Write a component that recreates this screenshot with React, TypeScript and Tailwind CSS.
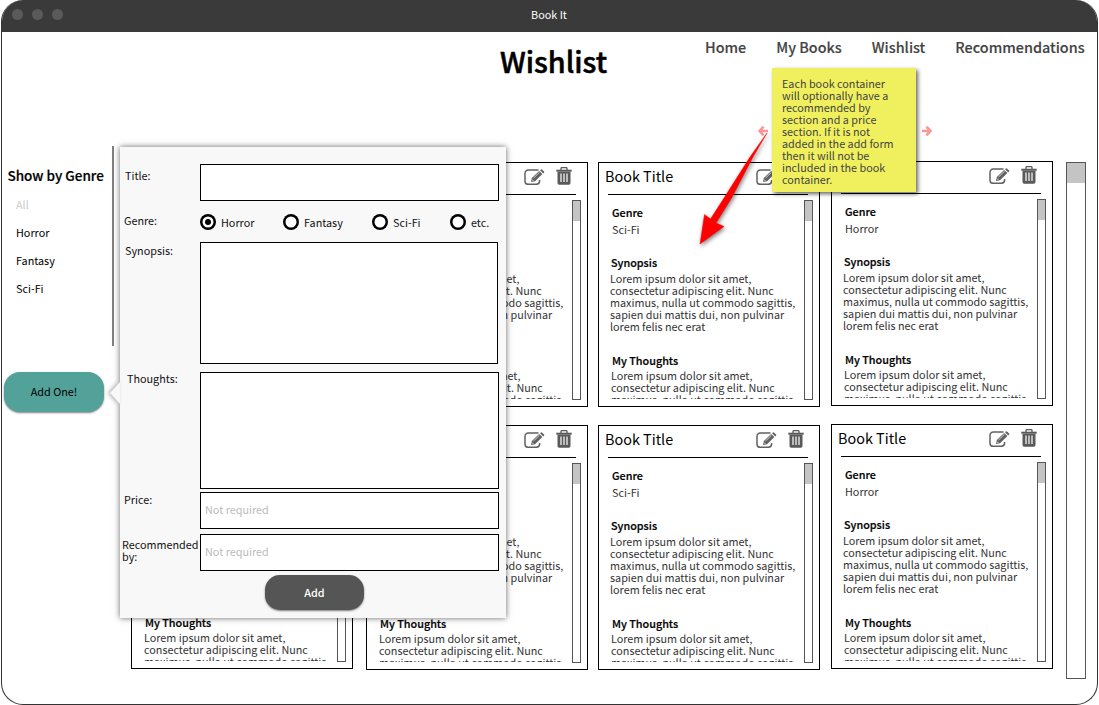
import React from "react";

const LOREM = [
  "Lorem ipsum dolor sit amet,",
  "consectetur adipiscing elit. Nunc",
  "maximus, nulla ut commodo sagittis,",
  "sapien dui mattis dui, non pulvinar",
  "lorem felis nec erat",
];

function EditIcon() {
  return (
    <svg className="h-4 w-[21px]" viewBox="0 0 21 16" fill="none">
      <path d="M14.5 1H4.2A3.2 3.2 0 0 0 1 4.2v8A3.2 3.2 0 0 0 4.2 15.3h8.2A3.2 3.2 0 0 0 15.6 12.1V11" stroke="#616161" strokeWidth="1.5" />
      <path d="M7 13l.8-4L15.2 2l3.2 3-7.4 7.2z" fill="#616161" />
      <path d="M16 1.3l.9-.8q.5-.4 1 0l2.2 2.1q.4.5 0 .9l-.9.9z" fill="#616161" />
      <path d="M9.5 9l6-5.7" stroke="#fff" strokeWidth=".7" />
      <path d="M8 10.6l1.5 1.5" stroke="#fff" strokeWidth=".8" />
    </svg>
  );
}

function TrashIcon() {
  return (
    <svg className="h-[18px] w-4" viewBox="0 0 16 18">
      <path d="M5 3V1.5Q5 .6 6 .6h4q1 0 1 .9V3" fill="none" stroke="#5a5a5a" strokeWidth="1.3" />
      <path d="M.3 2.7h15.4v2H.3z" fill="#5a5a5a" />
      <path d="M1.5 4.7h13v11.3q0 1.7-1.7 1.7H3.2q-1.7 0-1.7-1.7z" fill="#5a5a5a" />
      <path d="M5 6.5v8.5M8 6.5v8.5M11 6.5v8.5" stroke="#fff" strokeWidth="1.2" />
    </svg>
  );
}

function Scrollbar({ className }: { className: string }) {
  return (
    <div className={`shrink-0 border border-[#555] bg-white ${className}`}>
      <div className="h-5 bg-[#c4c4c4]" />
    </div>
  );
}

function Lines({ items }: { items: string[] }) {
  return (
    <>
      {items.map((t) => (
        <div key={t} className="h-3 whitespace-nowrap leading-3">{t}</div>
      ))}
    </>
  );
}

function BookCard({ genre }: { genre: string }) {
  return (
    <article className="h-[245px] w-[222px] shrink-0 border border-black bg-white text-[10.8px] text-[#333]">
      <header className="ml-[9px] flex h-8 w-[200px] items-start border-b border-black">
        <h3 className="-ml-[3px] mt-1 text-[14.4px] leading-[18px] text-black">Book Title</h3>
        <div className="ml-auto mr-1 flex gap-[11px] pt-1">
          <div className="pt-[2px]"><EditIcon /></div>
          <TrashIcon />
        </div>
      </header>
      <div className="ml-[11px] mt-[5px] flex h-[200px]">
        <div className="h-[199px] w-[194px] overflow-hidden leading-3">
          <h4 className="ml-[2px] mt-[6px] font-medium text-black [-webkit-text-stroke:0.2px]">Genre</h4>
          <p className="ml-[2px] mt-[5px]">{genre}</p>
          <h4 className="ml-px mt-[21px] font-medium text-black [-webkit-text-stroke:0.2px]">Synopsis</h4>
          <div className="mt-1"><Lines items={LOREM} /></div>
          <h4 className="ml-[2px] mt-[22px] font-medium text-black [-webkit-text-stroke:0.2px]">My Thoughts</h4>
          <div className="ml-px mt-[3px]"><Lines items={LOREM} /></div>
        </div>
        <Scrollbar className="h-[200px] w-[9px]" />
      </div>
    </article>
  );
}

function Radio({ label, checked, className }: { label: string; checked?: boolean; className: string }) {
  return (
    <label className={`flex h-4 items-center gap-[5px] ${className}`}>
      <span className="flex size-4 shrink-0 items-center justify-center rounded-full bg-white shadow-[inset_0_0_0_2.5px_#000]">
        {checked && <span className="size-[6px] rounded-full bg-black" />}
      </span>
      <span>{label}</span>
    </label>
  );
}

function AddForm() {
  const field = "shrink-0 border border-black bg-white";
  return (
    <section className="absolute left-[120px] top-[147px] h-[471px] w-[386px] bg-[#f8f8f8] text-[10.8px] leading-3 text-[#111] shadow-[0_0_6px_rgba(0,0,0,0.6)]">
      <svg className="absolute -left-[10px] top-[235px] h-[22px] w-[10px] overflow-visible drop-shadow-[-2px_0_2px_rgba(0,0,0,0.3)]" viewBox="0 0 10 22">
        <path d="M10 0L0 11l10 11z" fill="#f8f8f8" />
      </svg>
      <div className="flex pt-[17px]">
        <span className="w-20 pl-[5px] pt-[5px]">Title:</span>
        <div className={`h-[37px] w-[299px] ${field}`} />
      </div>
      <div className="mt-[13px] flex h-6">
        <span className="w-20 pl-1">Genre:</span>
        <Radio label="Horror" checked className="w-[83px]" />
        <Radio label="Fantasy" className="w-[89px]" />
        <Radio label="Sci-Fi" className="w-[78px]" />
        <Radio label="etc." className="w-12" />
      </div>
      <div className="mt-1 flex">
        <span className="w-20 pl-[5px] pt-[2px]">Synopsis:</span>
        <div className={`h-[122px] w-[298px] ${field}`} />
      </div>
      <div className="mt-2 flex">
        <span className="w-20 pl-[7px]">Thoughts:</span>
        <div className={`h-[117px] w-[299px] ${field}`} />
      </div>
      <div className="mt-[3px] flex">
        <span className="w-20 pl-1 pt-px">Price:</span>
        <div className={`flex h-[37px] w-[299px] items-center pb-[3px] pl-1 text-[#bbb] ${field}`}>Not required</div>
      </div>
      <div className="mt-[5px] flex">
        <span className="w-20 pl-[2px] pt-1">Recommended<br />by:</span>
        <div className={`flex h-[37px] w-[299px] items-center pb-[3px] pl-1 text-[#bbb] ${field}`}>Not required</div>
      </div>
      <button className="ml-[145px] mt-1 block h-[35px] w-[99px] rounded-[15px] bg-[#555] pb-[2px] font-medium text-white shadow-[0_1px_2px_rgba(0,0,0,0.5)]">Add</button>
    </section>
  );
}

function StickyNote() {
  return (
    <>
      <svg className="absolute left-[758px] top-[126px] h-[10px] w-[174px]" viewBox="0 0 174 10" fill="none" stroke="#ff9494" strokeWidth="2.6">
        <path d="M5.5 .7L1.5 5l4 4.3M1.5 5H10M168.5 .7L172.5 5l-4 4.3M172.5 5H164" />
      </svg>
      <aside className="absolute left-[772px] top-[68px] h-[124px] w-[144px] bg-[#f0f05e] pl-[10px] pt-[9px] text-[10.8px] text-[#444] shadow-[2px_2px_4px_rgba(0,0,0,0.6)]">
        <Lines
          items={[
            "Each book container",
            "will optionally have a",
            "recommended by",
            "section and a price",
            "section. If it is not",
            "added in the add form",
            "then it will not be",
            "included in the book",
            "container.",
          ]}
        />
      </aside>
      <svg className="absolute left-[695px] top-[125px] h-[125px] w-20 overflow-visible drop-shadow-[1px_2px_2px_rgba(0,0,0,0.5)]" viewBox="0 0 80 125">
        <path d="M72 8L55 32 29 73 15.5 94 9.500 89.500 5 119 29 101.500 21 98 36.500 73 58 32z" fill="#f00" stroke="#f00" strokeWidth=".5" />
      </svg>
    </>
  );
}

export default function App() {
  return (
    <div className="h-[705px] w-[1099px] overflow-hidden bg-white pl-px font-['Noto_Sans_CJK_SC','Noto_Sans',sans-serif]">
      <div className="relative h-[705px] w-[1097px] overflow-hidden rounded-[22px] border border-t-0 border-[#333] bg-white">
        <div className="flex h-8 items-start bg-[#3a3a3a] pt-2">
          <div className="flex w-[490px] gap-[9px] pl-[10px] pt-px">
            <i className="size-[11px] rounded-full bg-[#5a5a5a]" />
            <i className="size-[11px] rounded-full bg-[#5a5a5a]" />
            <i className="size-[11px] rounded-full bg-[#5a5a5a]" />
          </div>
          <span className="w-[114px] text-center text-[10.8px] leading-3 text-white">Book It</span>
        </div>
        <div className="flex h-[114px] items-start">
          <h1 className="ml-[498px] mt-[11px] w-[205px] text-[28.8px] font-medium leading-9 text-black [-webkit-text-stroke:0.5px]">Wishlist</h1>
          <nav className="mt-[6px] flex gap-[30px] whitespace-nowrap text-[14.4px] font-medium leading-[18px] text-[#444] [-webkit-text-stroke:0.15px]">
            <a>Home</a>
            <a>My Books</a>
            <a>Wishlist</a>
            <a>Recommendations</a>
          </nav>
        </div>
        <div className="flex">
          <aside className="w-[129px] shrink-0 text-[10.8px] text-black">
            <div className="h-[200px] w-28 border-r-2 border-[#808080] pt-5">
              <h2 className="ml-[5.5px] whitespace-nowrap text-[13.5px] font-medium leading-[18px] [-webkit-text-stroke:0.2px]">Show by Genre</h2>
              <div className="ml-[14px] mt-[6px] leading-7">
                <p className="text-[#ccc]">All</p>
                <p>Horror</p>
                <p>Fantasy</p>
                <p>Sci-Fi</p>
              </div>
            </div>
            <button className="ml-[2px] mt-[26px] block h-10 w-[100px] rounded-2xl bg-[#52a29a] pb-[2px] leading-3 shadow-[0_1px_2px_rgba(0,0,0,0.5)]">Add One!</button>
          </aside>
          <main className="mt-[15px] flex">
            <div className="mr-[13px] flex flex-col gap-[18px]"><BookCard genre="Horror" /><BookCard genre="Horror" /></div>
            <div className="mr-[10px] mt-px flex flex-col gap-[18px]"><BookCard genre="Fantasy" /><BookCard genre="Fantasy" /></div>
            <div className="mr-[11px] mt-px flex flex-col gap-[18px]"><BookCard genre="Sci-Fi" /><BookCard genre="Sci-Fi" /></div>
            <div className="mr-[13px] flex flex-col gap-[18px]"><BookCard genre="Horror" /><BookCard genre="Horror" /></div>
            <Scrollbar className="mt-px h-[517px] w-5" />
          </main>
        </div>
      </div>
      <AddForm />
      <StickyNote />
    </div>
  );
}
